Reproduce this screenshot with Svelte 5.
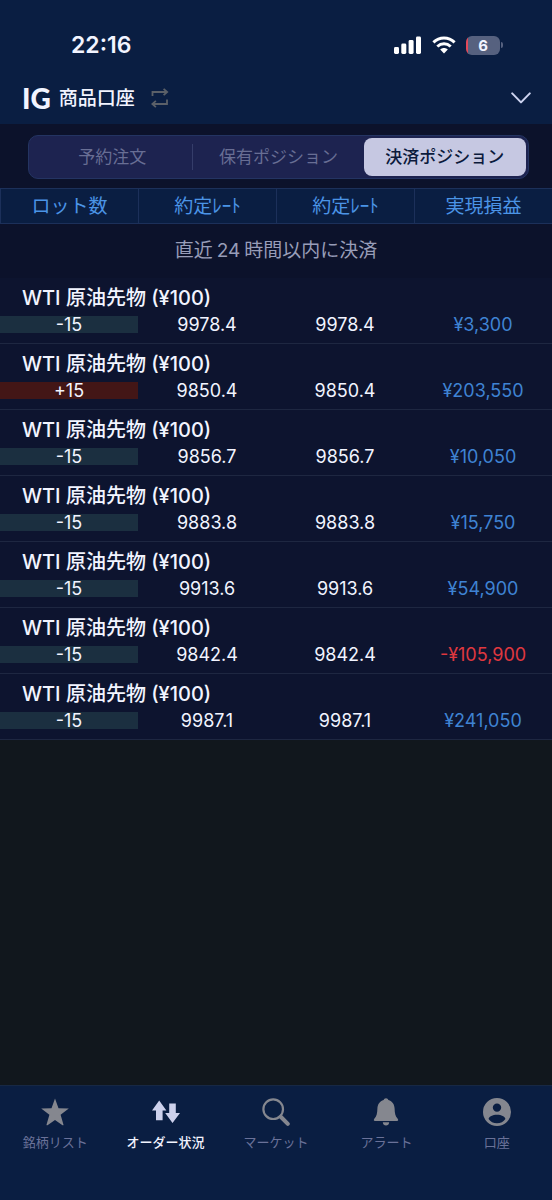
<script>
  const segments = ['予約注文', '保有ポジション', '決済ポジション'];
  const columns = ['ロット数', '約定ﾚｰﾄ', '約定ﾚｰﾄ', '実現損益'];

  const positions = [
    { lots: '-15', open: '9978.4', close: '9978.4', profit: '¥3,300' },
    { lots: '+15', open: '9850.4', close: '9850.4', profit: '¥203,550' },
    { lots: '-15', open: '9856.7', close: '9856.7', profit: '¥10,050' },
    { lots: '-15', open: '9883.8', close: '9883.8', profit: '¥15,750' },
    { lots: '-15', open: '9913.6', close: '9913.6', profit: '¥54,900' },
    { lots: '-15', open: '9842.4', close: '9842.4', profit: '-¥105,900' },
    { lots: '-15', open: '9987.1', close: '9987.1', profit: '¥241,050' }
  ];

  const tabs = [
    { icon: 'star', label: '銘柄リスト' },
    { icon: 'orders', label: 'オーダー状況' },
    { icon: 'search', label: 'マーケット' },
    { icon: 'bell', label: 'アラート' },
    { icon: 'account', label: '口座' }
  ];

  let segment = $state(2);
  let tab = $state('orders');
</script>

<div class="app">
  <header>
    <div class="status-bar">
      <span class="time">22:16</span>
      <div class="status-icons">
        <svg width="28" height="18" viewBox="0 0 28 18" fill="#fff">
          <rect x="0" y="11" width="5" height="7" rx="1.4" />
          <rect x="7.3" y="7.6" width="5" height="10.4" rx="1.4" />
          <rect x="14.6" y="4" width="5" height="14" rx="1.4" />
          <rect x="22" y="0.5" width="5" height="17.5" rx="1.4" />
        </svg>
        <svg width="24" height="18" viewBox="0 0 24 18" fill="none" stroke="#fff" stroke-width="3">
          <path d="M1.4 6.3C7.4 0.6 16.6 0.6 22.6 6.3" />
          <path d="M5.3 10.5C9.2 6.9 14.8 6.9 18.7 10.5" />
          <path d="M8.2 13.4C10.4 11.4 13.6 11.4 15.8 13.4L12 17.4Z" fill="#fff" stroke="none" />
        </svg>
        <div class="battery">
          <span class="battery-body">6</span>
          <span class="battery-tip"></span>
        </div>
      </div>
    </div>

    <div class="account-bar">
      <span class="logo">IG</span>
      <span class="account-name">商品口座</span>
      <button class="icon-button" aria-label="口座切替">
        <svg width="18" height="20" viewBox="0 0 18 20" fill="none" stroke="#5b6068" stroke-width="1.8">
          <path d="M1.5 8V4H16M12.6 0.8L16.2 4L12.6 7.2" />
          <path d="M16 11.5V16H1.5M4.9 12.8L1.3 16L4.9 19.2" />
        </svg>
      </button>
      <button class="icon-button expand" aria-label="開く">
        <svg width="20" height="12" viewBox="0 0 20 12" fill="none" stroke="#cdd3f0" stroke-width="2" stroke-linecap="round" stroke-linejoin="round">
          <path d="M1.2 1.4L10 10.4L18.8 1.4" />
        </svg>
      </button>
    </div>
  </header>

  <main>
    <div class="segments">
      {#each segments as name, i}
        <button class="segment" class:active={segment === i} onclick={() => (segment = i)}>{name}</button>
      {/each}
    </div>

    <table>
      <thead>
        <tr>
          {#each columns as column}
            <th>{column}</th>
          {/each}
        </tr>
      </thead>
      <tbody>
        <tr>
          <td class="period" colspan="4">直近<span>24</span>時間以内に決済</td>
        </tr>
        {#each positions as p}
          <tr>
            <td class="market" colspan="4">WTI 原油先物 (¥100)</td>
          </tr>
          <tr class="values">
            <td><div class="lots" class:buy={p.lots.startsWith('+')}>{p.lots}</div></td>
            <td>{p.open}</td>
            <td>{p.close}</td>
            <td class="profit" class:loss={p.profit.startsWith('-')}>{p.profit}</td>
          </tr>
        {/each}
      </tbody>
    </table>
  </main>

  <nav>
    {#each tabs as t}
      <button class="tab" class:active={tab === t.icon} onclick={() => (tab = t.icon)}>
        <svg width="28" height="28" viewBox="0 0 28 28" fill="currentColor">
          {#if t.icon === 'star'}
            <path d="M14 0.5L17.5 10.2L27.8 10.5L19.6 16.8L22.5 26.7Q22.5 27.6 21.5 27.2L14 22L6.5 27.2Q5.5 27.6 5.5 26.7L8.4 16.8L0.2 10.5L10.5 10.2Z" />
          {:else if t.icon === 'orders'}
            <path d="M7.2 2.6L14.4 12.6H10.6V22.2H4V12.6H0Z" />
            <path d="M17.2 5.4H23.8V15H28L20.5 25L13.2 15H17.2Z" />
          {:else if t.icon === 'search'}
            <circle cx="11.2" cy="11.2" r="9.8" fill="none" stroke="currentColor" stroke-width="2.2" />
            <path d="M19 19L25.8 25.8" fill="none" stroke="currentColor" stroke-width="4" stroke-linecap="round" />
          {:else if t.icon === 'bell'}
            <path d="M14 0.2C15.3 0.2 16 1 16.3 2C20.5 3.2 22.4 6.5 22.6 10.5C22.8 15 23.2 18.5 25.7 20.8Q27 22.9 25 23H3Q1 22.9 2.3 20.8C4.8 18.5 5.2 15 5.4 10.5C5.6 6.5 7.5 3.2 11.7 2C12 1 12.7 0.2 14 0.2Z" />
            <path d="M10.8 24.3H17.2C17 26.5 15.8 27.6 14 27.6C12.2 27.6 11 26.5 10.8 24.3Z" />
          {:else}
            <path fill-rule="evenodd" d="M14 0A14 14 0 1 1 14 28A14 14 0 1 1 14 0ZM14 5.4A4.2 4.2 0 1 0 14 13.8A4.2 4.2 0 1 0 14 5.4ZM14 16.8C9.6 16.8 6 18.4 5.6 21C7.4 23.8 10.4 25.2 14 25.2C17.6 25.2 20.6 23.8 22.4 21C22 18.4 18.4 16.8 14 16.8Z" />
          {/if}
        </svg>
        <span>{t.label}</span>
      </button>
    {/each}
  </nav>
</div>

<style>
  :global(body) {
    background: #11171d;
  }

  .app {
    display: flex;
    flex-direction: column;
    min-height: 100vh;
    color: #f2f4ff;
    font-family: Inter, 'Noto Sans CJK JP', sans-serif;
  }

  button {
    padding: 0;
    border: none;
    background: none;
    color: inherit;
    font-family: inherit;
    cursor: pointer;
  }

  svg {
    display: block;
  }

  header {
    height: 124px;
    background: #0a1e42;
  }

  .status-bar {
    display: flex;
    align-items: center;
    justify-content: space-between;
    box-sizing: border-box;
    height: 72px;
    padding: 18px 49px 0 71px;
  }

  .time {
    font-size: 23px;
    font-weight: 600;
  }

  .status-icons {
    display: flex;
    align-items: center;
    gap: 10px;
  }

  .battery {
    display: flex;
    align-items: center;
    gap: 1px;
  }

  .battery-body {
    width: 34px;
    height: 19px;
    border-radius: 6px;
    background: linear-gradient(to right, #e2495a 2px, #56617f 2px);
    font-size: 15px;
    font-weight: 700;
    line-height: 19px;
    text-align: center;
  }

  .battery-tip {
    width: 2px;
    height: 6px;
    border-radius: 0 2px 2px 0;
    background: #56617f;
  }

  .account-bar {
    display: flex;
    align-items: center;
    box-sizing: border-box;
    height: 52px;
    padding: 0 21px 0 22px;
  }

  .logo {
    font-family: Lato, sans-serif;
    font-size: 28px;
    font-weight: 900;
  }

  .account-name {
    margin-left: 8px;
    padding-bottom: 4px;
    font-size: 19px;
    font-weight: 500;
  }

  .icon-button {
    margin-left: 16px;
  }

  .expand {
    margin-left: auto;
  }

  main {
    flex: 1;
    padding-top: 11px;
    background: linear-gradient(#0c122b, #0c122b) top / 100% 64px no-repeat;
  }

  .segments {
    display: grid;
    grid-template-columns: repeat(3, 1fr);
    gap: 4px;
    height: 38px;
    margin: 0 23px 9px 28px;
    padding: 2px;
    border: 1px solid #243462;
    border-radius: 10px;
    background: #1d2350;
  }

  .segment {
    position: relative;
    padding-bottom: 3px;
    border-radius: 8px;
    color: #686e94;
    font-size: 17px;
  }

  .segment:first-child::after {
    content: '';
    position: absolute;
    top: 6px;
    right: 0;
    width: 1px;
    height: 26px;
    background: #353d6a;
  }

  .segment.active {
    background: #c6c8e2;
    color: #0b1a3c;
    font-weight: 500;
  }

  table {
    width: 100%;
    border-collapse: separate;
    border-spacing: 0;
    table-layout: fixed;
    background: #0d142f;
  }

  th {
    box-sizing: border-box;
    height: 36px;
    padding: 2px 0 0;
    border: 1px solid #1c305a;
    border-width: 1px 0 1px 1px;
    background: #0a1e42;
    color: #4b94e6;
    font-size: 19px;
    font-weight: 400;
    line-height: 24px;
  }

  td {
    padding: 0;
  }

  .period {
    height: 54px;
    background: #0c122b;
    color: #989db8;
    font-size: 19px;
    line-height: 24px;
    text-align: center;
  }

  .period span {
    padding: 0 4px;
  }

  .market {
    height: 36px;
    padding: 2px 0 0 22px;
    font-size: 20px;
    font-weight: 500;
    line-height: 28px;
  }

  .values td {
    height: 27px;
    border-bottom: 1px solid #1e2741;
    font-size: 18px;
    line-height: 17px;
    text-align: center;
    vertical-align: top;
  }

  .lots {
    background: #1b2f40;
  }

  .lots.buy {
    background: #431616;
  }

  .values .profit {
    color: #3f83d3;
  }

  .values .loss {
    color: #e0383f;
  }

  nav {
    display: grid;
    grid-template-columns: repeat(5, 1fr);
    box-sizing: border-box;
    height: 115px;
    border-top: 1px solid #172844;
    background: #0a1e42;
  }

  .tab {
    display: flex;
    flex-direction: column;
    align-items: center;
    gap: 6px;
    padding-top: 12px;
    color: #85878f;
  }

  .tab span {
    color: #6a7299;
    font-size: 13px;
    line-height: 20px;
    white-space: nowrap;
  }

  .tab.active {
    color: #cdd1ec;
  }

  .tab.active span {
    color: #f2f4ff;
    font-weight: 500;
  }
</style>
